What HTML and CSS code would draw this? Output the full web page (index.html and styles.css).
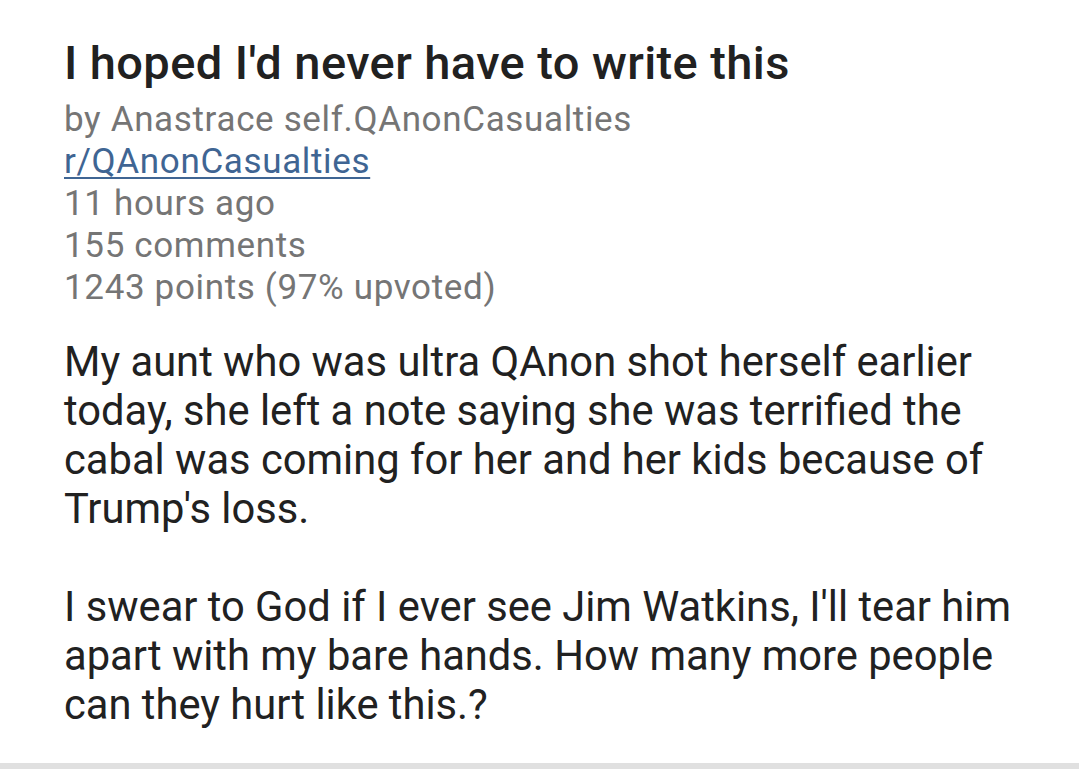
FILE: index.html
```html
<!DOCTYPE html>
<html>
<head>
<meta charset="utf-8">
<link rel="stylesheet" href="styles.css">
</head>
<body>
<div class="page">
  <article class="post">
    <h1 class="title">I hoped I'd never have to write this</h1>
    <div class="meta">
      <div class="meta-line">by Anastrace self.QAnonCasualties</div>
      <div class="meta-line"><a class="sub" href="#">r/QAnonCasualties</a></div>
      <div class="meta-line">11 hours ago</div>
      <div class="meta-line">155 comments</div>
      <div class="meta-line">1243 points (97% upvoted)</div>
    </div>
    <div class="body">
      <p>My aunt who was ultra QAnon shot herself earlier today, she left a note saying she was terrified the cabal was coming for her and her kids because of Trump's loss.</p>
      <p>I swear to God if I ever see Jim Watkins, I'll tear him apart with my bare hands. How many more people can they hurt like this.?</p>
    </div>
  </article>
  <div class="footer-bar"></div>
</div>
</body>
</html>
```
FILE: styles.css
```css
html, body {
  margin: 0;
  padding: 0;
  background: #ffffff;
}
.page {
  width: 1079px;
  height: 769px;
  display: flex;
  flex-direction: column;
  overflow: hidden;
  font-family: Roboto, "Noto Sans", sans-serif;
}
.post {
  flex: 1 1 auto;
  min-height: 0;
  padding: 37px 35px 0 64px;
}
.title {
  margin: 0;
  font-size: 47px;
  font-weight: 500;
  letter-spacing: 0.4px;
  line-height: 52px;
  color: #212121;
}
.meta {
  margin-top: 10px;
  color: #757575;
  font-size: 35px;
  letter-spacing: 0.65px;
  line-height: 42px;
}
.sub {
  color: #3f6593;
  text-decoration: underline;
  text-decoration-thickness: 2px;
  text-underline-offset: 4px;
}
.body {
  margin-top: 28px;
  color: #212121;
  font-size: 41.7px;
  line-height: 49px;
}
.body p {
  margin: 0 0 49px 0;
}
.body p:last-child {
  margin-bottom: 0;
}
.footer-bar {
  flex: 0 0 6px;
  height: 6px;
  background: #e0e0e0;
}
```
